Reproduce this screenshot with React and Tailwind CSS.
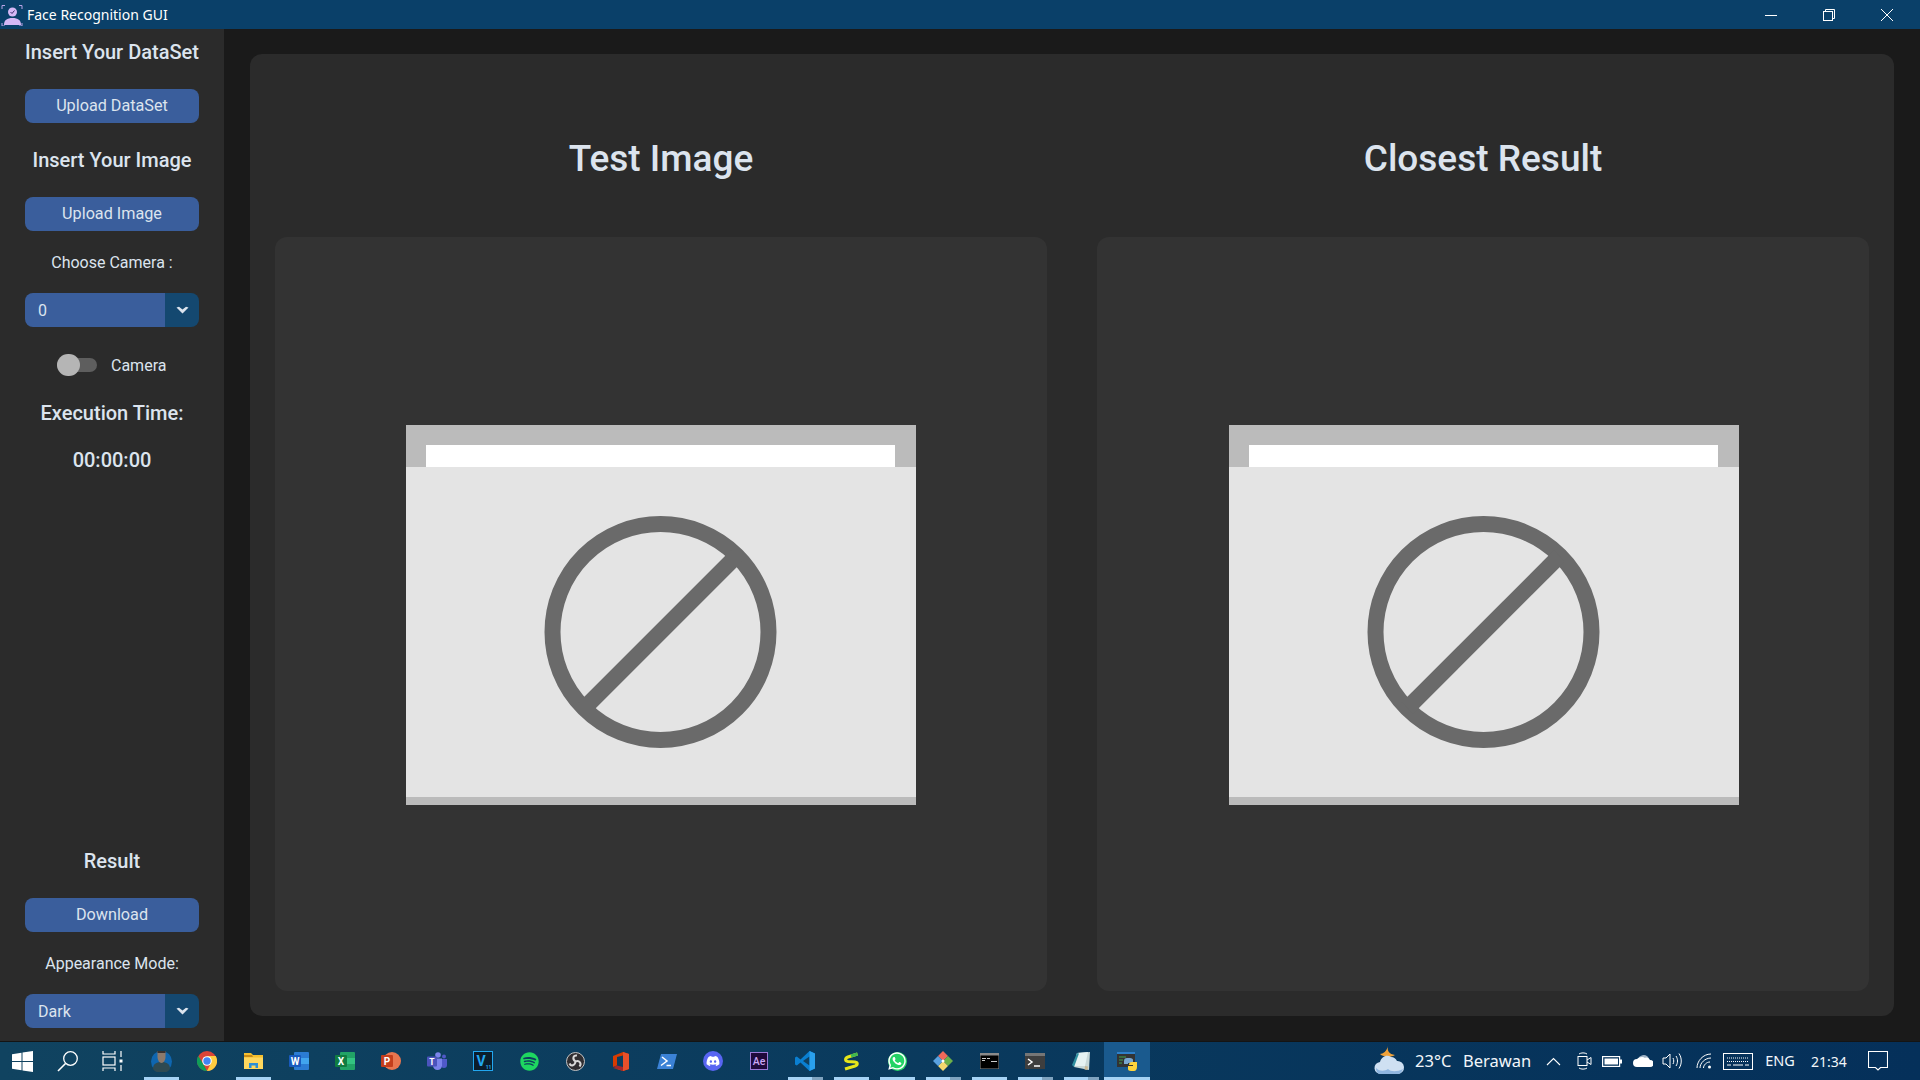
import React from 'react';
import { FaSpotify, FaDiscord, FaWhatsapp } from 'react-icons/fa';

const Heading = ({ className = '', children }) => (
  <div className={`flex h-7 items-center justify-center text-[20px] font-medium text-[#dce4ee] ${className}`}>{children}</div>
);

const Label = ({ className = '', children }) => (
  <div className={`flex h-6 items-center justify-center pt-[2px] text-[16px] text-[#dce4ee] ${className}`}>{children}</div>
);

const SideButton = ({ className = '', children }) => (
  <button className={`mx-[25px] flex h-[34px] w-[174px] items-center justify-center rounded-lg bg-[#3a5e9c] text-[16.2px] text-[#dce4ee] ${className}`}>
    {children}
  </button>
);

const Dropdown = ({ className = '', value }) => (
  <div className={`mx-[25px] flex h-[34px] w-[174px] overflow-hidden rounded-lg ${className}`}>
    <div className="flex w-[140px] items-center bg-[#3a5e9c] pl-[13px] pt-[2px] text-[16px] text-[#dce4ee]">{value}</div>
    <div className="flex w-[34px] items-center justify-center bg-[#144870] pl-px">
      <svg width="13" height="8" viewBox="0 0 13 8">
        <path d="M0.500 1.500 3 0.800 6.500 3.500 10 0.800 12.500 1.500 6.500 7.500z" fill="#dce4ee" />
      </svg>
    </div>
  </div>
);

const NoImage = () => (
  <svg width="510" height="380" viewBox="0 0 510 380" className="shrink-0">
    <rect width="510" height="380" fill="#e4e4e4" />
    <rect width="510" height="42" fill="#bbbbbb" />
    <rect x="20" y="20" width="469" height="22" fill="#ffffff" />
    <rect y="372" width="510" height="8" fill="#bbbbbb" />
    <circle cx="254.500" cy="207" r="108" fill="none" stroke="#6a6a6a" strokeWidth="16" />
    <line x1="330.500" y1="131" x2="178.500" y2="283" stroke="#6a6a6a" strokeWidth="16" />
  </svg>
);

const AppIcon = () => (
  <svg width="22" height="22" viewBox="0 0 22 22" fill="none">
    <path d="M1 5V1.500H4M18 1.500H21V5M1 19V22H4M18 22H21V19" stroke="#b9a4e8" strokeWidth="1" />
    <circle cx="11.500" cy="8" r="4.500" fill="#d5b8f5" />
    <path d="M3 21c0-5 3-7 8.500-7S20 16 20 21z" fill="#d5b8f5" />
    <path d="M9.500 8l1.500 1.500 2.500-3" stroke="#3a2a6a" strokeWidth="1" />
  </svg>
);

// taskbar icons
const Win = () => (
  <svg width="21" height="21" viewBox="0 0 21 21" fill="#fff">
    <path d="M0 3.200 9.500 1.800V10H0zM10.500 1.600 21 0V10H10.500zM0 11H9.500V19.200L0 17.800zM10.500 11H21V21L10.500 19.400z" />
  </svg>
);
const Search = () => (
  <svg width="22" height="22" viewBox="0 0 22 22" fill="none" stroke="#fff" strokeWidth="1.300">
    <circle cx="13.500" cy="8.500" r="6.800" />
    <path d="M8.500 13.500 1 21" strokeWidth="1.600" />
  </svg>
);
const TaskView = () => (
  <svg width="21" height="20" viewBox="0 0 21 20" fill="none" stroke="#fff" strokeWidth="1.200">
    <path d="M1 0v3h12V0M1 20v-3h12v3" />
    <rect x="1" y="6" width="12" height="8" />
    <path d="M19 0v6M19 14v6" />
    <rect x="17.500" y="8.500" width="3" height="3" fill="#fff" stroke="none" />
  </svg>
);
const Profile = () => (
  <svg width="21" height="21" viewBox="0 0 21 21">
    <circle cx="10.500" cy="10.500" r="10.500" fill="#0f66b0" />
    <path d="M2 18c0-5 3-7 8.500-7s8.500 2 8.500 7a10.500 10.500 0 0 1-17 0z" fill="#2f4a52" />
    <path d="M6.500 0h8v6c0 3-2 6-4 6s-4-3-4-6z" fill="#8d7a6c" />
    <path d="M6.500 0h8v2h-8z" fill="#3a3230" />
  </svg>
);
const Chrome = () => (
  <svg width="20" height="20" viewBox="0 0 20 20">
    <circle cx="10" cy="10" r="10" fill="#db4437" />
    <path d="M10 20A10 10 0 0 1 1.300 5L6 12.500 10 20z" fill="#0f9d58" />
    <path d="M10 20A10 10 0 0 0 18.700 5H10l4 7z" fill="#ffcd40" />
    <circle cx="10" cy="10" r="4.800" fill="#fff" />
    <circle cx="10" cy="10" r="3.700" fill="#4285f4" />
  </svg>
);
const Explorer = () => (
  <svg width="19" height="16" viewBox="0 0 19 16">
    <path d="M0 0h7l2 2h10v14H0z" fill="#f5c02f" />
    <path d="M0 2h8l1 2H0z" fill="#c98b17" />
    <path d="M0 4.500h19V16H0z" fill="#ffd85e" />
    <path d="M5 15v-5h9v5h-2.500v-2.500h-4V15z" fill="#2d8fd5" />
  </svg>
);
const Office = ({ front, back, back2, letter }) => (
  <svg width="20" height="18" viewBox="0 0 20 18">
    <rect x="5" width="15" height="18" rx="1" fill={back} />
    <rect x="12" y="6" width="8" height="6" fill={back2} />
    <rect y="3" width="12" height="12" rx="1" fill={front} />
    <text x="6" y="12.500" textAnchor="middle" fontFamily="Roboto, sans-serif" fontWeight="700" fontSize="10" fill="#fff">{letter}</text>
  </svg>
);
const Ppt = () => (
  <svg width="20" height="18" viewBox="0 0 20 18">
    <circle cx="11" cy="9" r="9" fill="#e9764f" />
    <rect y="3" width="12" height="12" rx="1" fill="#c43e1c" />
    <text x="6" y="12.500" textAnchor="middle" fontFamily="Roboto, sans-serif" fontWeight="700" fontSize="10" fill="#fff">P</text>
  </svg>
);
const Teams = () => (
  <svg width="20" height="18" viewBox="0 0 20 18">
    <circle cx="11" cy="3" r="2.800" fill="#7b83eb" />
    <circle cx="17" cy="4.500" r="2" fill="#5059c9" />
    <path d="M14 7h6v6a3 3 0 0 1-6 0z" fill="#5059c9" />
    <path d="M6 6.500h9v7a4.500 4.500 0 0 1-9 0z" fill="#7b83eb" />
    <rect y="4.500" width="10" height="10" rx="1" fill="#4b53bc" />
    <text x="5" y="12.500" textAnchor="middle" fontFamily="Roboto, sans-serif" fontWeight="700" fontSize="8.500" fill="#fff">T</text>
  </svg>
);
const Wondershare = () => (
  <svg width="20" height="20" viewBox="0 0 20 20">
    <rect x="0.500" y="0.500" width="19" height="19" fill="#0b1d2c" stroke="#22a7f0" />
    <text x="8" y="15" textAnchor="middle" fontFamily="Roboto, sans-serif" fontWeight="700" fontSize="14" fill="#22a7f0">V</text>
    <text x="15.500" y="17.500" textAnchor="middle" fontFamily="Roboto, sans-serif" fontWeight="700" fontSize="5" fill="#22a7f0">11</text>
  </svg>
);
const Obs = () => (
  <svg width="19" height="19" viewBox="0 0 19 19" fill="none">
    <circle cx="9.500" cy="9.500" r="9" fill="#302e31" stroke="#c4c4c4" strokeWidth="1" />
    <path d="M9.500 9.500C6 7 7 3 11 3.500M9.500 9.500C13.500 8 16 11.500 13.500 14.500M9.500 9.500C9 13.500 5 15 3.500 11.500" stroke="#d8d8d8" strokeWidth="2" />
  </svg>
);
const OfficeLogo = () => (
  <svg width="16" height="19" viewBox="0 0 16 19">
    <path d="M0 4 10 0l6 2v15l-6 2-10-3 10 1V3.500L4 5v8.500L0 15z" fill="#d83b01" />
    <path d="M10 0l6 2v15l-6 2z" fill="#e8502a" />
    <path d="M0 15l4-1.500L10 15v4z" fill="#a4262c" />
  </svg>
);
const PowerShell = () => (
  <svg width="20" height="15" viewBox="0 0 20 15">
    <path d="M4 0h16l-4 15H0z" fill="#3b82d6" />
    <path d="M5 3l5 4-6 4.500" fill="none" stroke="#fff" strokeWidth="1.500" />
    <path d="M9.500 11.500h4.500" stroke="#fff" strokeWidth="1.500" />
  </svg>
);
const Ae = () => (
  <svg width="18" height="18" viewBox="0 0 18 18">
    <rect x="0.500" y="0.500" width="17" height="17" fill="#1f0a3c" stroke="#9a7ad8" />
    <text x="9" y="13" textAnchor="middle" fontFamily="Roboto, sans-serif" fontWeight="500" fontSize="10.500" fill="#c9a6f5">Ae</text>
  </svg>
);
const VsCode = () => (
  <svg width="20" height="20" viewBox="0 0 20 20">
    <path d="M14.500 0 20 2.500v15L14.500 20 5.500 11.500 1.800 14.500 0 13.500V6.500l1.800-1 3.700 3z" fill="#0a7fd1" />
    <path d="M14.500 5.500 8 10l6.500 4.500z" fill="#0f4060" />
    <path d="M14.500 0 20 2.500v15L14.500 20z" fill="#2aa0ec" />
  </svg>
);
const Sublime = () => (
  <svg width="16" height="19" viewBox="0 0 16 19" fill="none">
    <path d="M14.500 2 5 5C1.500 6.500 2 9 5 9.500l7 .5c3 .5 3 3 0 4L2 17" stroke="#e6e61a" strokeWidth="3" />
    <path d="M14.500 2 8 4" stroke="#3fb950" strokeWidth="3" />
  </svg>
);
const Git = () => (
  <svg width="20" height="20" viewBox="0 0 20 20">
    <path d="M10 0l5 5-5 5-5-5z" fill="#f0685a" />
    <path d="M15 5l5 5-5 5-5-5z" fill="#6cb04a" />
    <path d="M10 10l5 5-5 5-5-5z" fill="#f5d76e" />
    <path d="M5 5l5 5-5 5-5-5z" fill="#5aa2e0" />
    <circle cx="10" cy="10" r="1.500" fill="#fff" />
  </svg>
);
const Cmd = () => (
  <svg width="19" height="16" viewBox="0 0 19 16">
    <rect width="19" height="16" fill="#8a8a8a" />
    <rect x="0.500" y="2.500" width="18" height="13" fill="#000" />
    <path d="M2 5h4v1H2zM2 7h3v1H2zM7 5h3v1H7zM11 8h6v1h-6z" fill="#ccc" />
  </svg>
);
const Terminal = () => (
  <svg width="20" height="16" viewBox="0 0 20 16">
    <rect width="20" height="16" fill="#3e3e3e" />
    <rect width="20" height="3" fill="#767676" />
    <path d="M3 6l4 3-4 3" fill="none" stroke="#fff" strokeWidth="1.500" />
    <path d="M9 13h6" stroke="#fff" strokeWidth="1.500" />
  </svg>
);
const Notepad = () => (
  <svg width="18" height="19" viewBox="0 0 18 19">
    <path d="M5 1 18 0l-1 18-15-3z" fill="#c8d8d8" />
    <path d="M5 1l11-1-3 14H2z" fill="#e6f2f2" />
    <path d="M0 13 5 1l2 .5L2 15z" fill="#2f8fa0" />
    <path d="M13 14l3 .5-.5 3.500-3-.5z" fill="#c8b894" />
  </svg>
);
const PyApp = () => (
  <svg width="20" height="19" viewBox="0 0 20 19">
    <rect width="18" height="15" fill="#333" />
    <rect width="18" height="2" fill="#2e80c9" />
    <path d="M2 5h7M2 8h4M2 11h3" stroke="#3fa34d" strokeWidth="1" />
    <path d="M7 12V9c0-2 1-3 3-3h3c2 0 3 1 3 2v3h-5v1z" fill="#7aa7d0" />
    <path d="M20 10v5c0 2-1 4-3 4h-3c-2 0-3-1-3-2v-3h5v-1h-4c0-2 1-3 3-3z" fill="#ffd43b" />
  </svg>
);
const Weather = () => (
  <svg width="31" height="30" viewBox="0 0 31 30">
    <path d="M14 0c-1 5 1 8 7 9-4 3-12 2-15-1 3 0 7-3 8-8z" fill="#f0a23a" />
    <path d="M7 28a6 6 0 0 1-1-12c1-5 7-8 11-5 3 0 5 2 6 4a6.500 6.500 0 0 1 1 13z" fill="#cfe0f2" />
    <path d="M2 22c4 4 9 3 12 1 3 3 9 3 15 0-1 3-3 5-5 5H7c-3 0-5-2-5-6z" fill="#8fb6e0" />
  </svg>
);
const Chevron = () => (
  <svg width="15" height="9" viewBox="0 0 15 9" fill="none" stroke="#fff" strokeWidth="1.100">
    <path d="M1 8 7.500 1.500 14 8" />
  </svg>
);
const Meet = () => (
  <svg width="15" height="18" viewBox="0 0 15 18" fill="none" stroke="#fff" strokeWidth="1">
    <rect x="1" y="4.500" width="9" height="9" />
    <path d="M10 8l4-2.500v7L10 10" />
    <path d="M2 2c2-1.500 6-1.500 8 0M2 16c2 1.500 6 1.500 8 0" />
  </svg>
);
const Battery = () => (
  <svg width="20" height="11" viewBox="0 0 20 11">
    <rect x="0.600" y="0.600" width="17" height="9.800" fill="none" stroke="#fff" strokeWidth="1.200" />
    <rect x="2.500" y="2.500" width="13.500" height="6" fill="#fff" />
    <rect x="18" y="3.500" width="2" height="4" fill="#fff" />
  </svg>
);
const OneDrive = () => (
  <svg width="20" height="12" viewBox="0 0 20 12">
    <path d="M5 4C6 1 9 0 11 0c2 0 4 1 5 4z" fill="#9fb2c4" />
    <path d="M4 12a4 4 0 0 1 0-8c2-2 6-3 8-1 2-1 4 0 5 2a3.500 3.500 0 0 1 0 7z" fill="#fff" />
  </svg>
);
const Speaker = () => (
  <svg width="20" height="18" viewBox="0 0 20 18" fill="none" stroke="#fff" strokeWidth="1">
    <path d="M1 6h3l4-4v14l-4-4H1z" />
    <path d="M11 6c1 2 1 4 0 6M14 4c2 3 2 7 0 10M17 1.500c3 4.500 3 10.500 0 15" />
  </svg>
);
const Wifi = () => (
  <svg width="16" height="16" viewBox="0 0 16 16" fill="none" stroke="#fff" strokeWidth="1">
    <path d="M1 15C1 8 7 1 15 1M4 15c0-5 5-10 11-10M7.500 15c0-3 3-6 6.500-6" />
    <circle cx="13.500" cy="14" r="1.500" fill="#fff" stroke="none" />
  </svg>
);
const Keyboard = () => (
  <svg width="30" height="17" viewBox="0 0 30 17" fill="none" stroke="#fff" strokeWidth="1">
    <rect x="0.500" y="0.500" width="29" height="16" />
    <path d="M4 5h22M4 8.500h22" strokeDasharray="1 1" />
    <path d="M4 12h4M10 12h10M22 12h4" />
  </svg>
);
const Notif = () => (
  <svg width="20" height="20" viewBox="0 0 20 20" fill="none" stroke="#fff" strokeWidth="1.100">
    <path d="M0.500 0.500h19v16h-7l-2.500 2.500-2.500-2.500h-7z" />
  </svg>
);

const apps = [
  { icon: <Profile />, bar: 'open' },
  { icon: <Chrome /> },
  { icon: <Explorer />, bar: 'open' },
  { icon: <Office front="#185abd" back="#2b7cd3" back2="#41a5ee" letter="W" /> },
  { icon: <Office front="#107c41" back="#21a366" back2="#33c481" letter="X" /> },
  { icon: <Ppt /> },
  { icon: <Teams /> },
  { icon: <Wondershare /> },
  { icon: <FaSpotify size={19} className="text-[#1ed760]" /> },
  { icon: <Obs /> },
  { icon: <OfficeLogo /> },
  { icon: <PowerShell /> },
  { icon: <span className="flex h-5 w-5 items-center justify-center rounded-full bg-[#5865f2]"><FaDiscord size={14} className="text-white" /></span> },
  { icon: <Ae /> },
  { icon: <VsCode />, bar: 'multi' },
  { icon: <Sublime />, bar: 'open' },
  { icon: <span className="flex h-[19px] w-[19px] items-center justify-center rounded-full bg-[#25d366]"><FaWhatsapp size={20} className="shrink-0 text-white" /></span>, bar: 'open' },
  { icon: <Git />, bar: 'multi' },
  { icon: <Cmd />, bar: 'open' },
  { icon: <Terminal />, bar: 'multi' },
  { icon: <Notepad />, bar: 'multi' },
  { icon: <PyApp />, bar: 'active' },
];

const TaskButton = ({ icon, bar }) => (
  <div className={`relative flex h-full w-[46px] items-center justify-center ${bar === 'active' ? 'bg-[#1a5a8e]' : ''}`}>
    {icon}
    {bar === 'open' && <div className="absolute bottom-0 left-[6px] h-[3px] w-[35px] bg-[#a6d3f5]" />}
    {bar === 'multi' && (
      <div className="absolute bottom-0 left-[6px] flex h-[3px] w-[35px]">
        <div className="w-6 bg-[#a6d3f5]" />
        <div className="flex-1 bg-[#7fa3bf]" />
      </div>
    )}
    {bar === 'active' && <div className="absolute bottom-0 left-0 h-[3px] w-full bg-[#a6d3f5]" />}
  </div>
);

const TrayIcon = ({ className = '', children }) => (
  <div className={`flex items-center justify-center ${className}`}>{children}</div>
);

export default function App() {
  return (
    <div className="flex h-screen flex-col overflow-hidden bg-[#1a1a1a] font-['Roboto',sans-serif]">
      {/* Title bar */}
      <header className="flex h-[29px] shrink-0 items-center bg-[#0a4069]">
        <div className="ml-px"><AppIcon /></div>
        <span className="ml-1 font-['Noto_Sans',sans-serif] text-[14px] text-white">Face Recognition GUI</span>
        <div className="ml-auto flex h-full pr-[2px]">
          <div className="flex w-[58px] items-center justify-center">
            <svg width="12" height="12" viewBox="0 0 12 12" stroke="#fff"><path d="M0 6.500h12" /></svg>
          </div>
          <div className="flex w-[58px] items-center justify-center">
            <svg width="12" height="12" viewBox="0 0 12 12" fill="none" stroke="#fff"><rect x="0.500" y="2.500" width="9" height="9" /><path d="M2.500 2.500V0.500h9v9H9.500" /></svg>
          </div>
          <div className="flex w-[60px] items-center justify-center pr-[3px]">
            <svg width="12" height="12" viewBox="0 0 12 12" stroke="#fff"><path d="M0 0l12 12M12 0 0 12" /></svg>
          </div>
        </div>
      </header>

      <div className="flex min-h-0 flex-1">
        {/* Sidebar */}
        <aside className="flex w-[224px] shrink-0 flex-col justify-between bg-[#2b2b2b] pb-[13px] pt-[9px]">
          <div>
            <Heading>Insert Your DataSet</Heading>
            <SideButton className="mt-[23px]">Upload DataSet</SideButton>
            <Heading className="mt-[23px]">Insert Your Image</Heading>
            <SideButton className="mt-[23px]">Upload Image</SideButton>
            <Label className="mt-[19px]">Choose Camera :</Label>
            <Dropdown className="mt-[19px]" value="0" />
            <div className="mt-[27px] flex h-[22px] items-center pl-[57px]">
              <div className="relative h-[14px] w-[40px] rounded-full bg-[#5e5e5e]">
                <div className="absolute -top-1 left-0 h-[22px] w-[23px] rounded-full bg-[#b5b5b5]" />
              </div>
              <span className="ml-[14px] pt-[2px] text-[16px] text-[#dce4ee]">Camera</span>
            </div>
            <Heading className="mt-[23px]">Execution Time:</Heading>
            <Heading className="mt-[19px]">00:00:00</Heading>
          </div>
          <div>
            <Heading>Result</Heading>
            <SideButton className="mt-[23px]">Download</SideButton>
            <Label className="mt-[19px]">Appearance Mode:</Label>
            <Dropdown className="mt-[19px]" value="Dark" />
          </div>
        </aside>

        {/* Main panel */}
        <main className="min-w-0 flex-1 p-[25px] pl-[26px] pr-[26px]">
          <div className="grid h-full grid-cols-2 grid-rows-[183px_1fr] gap-x-[50px] rounded-xl bg-[#2b2b2b] px-[25px] pb-[25px]">
            <h1 className="flex items-center justify-center pt-[27px] text-[37px] font-medium text-[#dce4ee]">Test Image</h1>
            <h1 className="flex items-center justify-center pt-[27px] text-[37px] font-medium text-[#dce4ee]">Closest Result</h1>
            <div className="flex items-center justify-center rounded-xl bg-[#333333] pt-[2px]"><NoImage /></div>
            <div className="flex items-center justify-center rounded-xl bg-[#333333] pl-px pt-[2px]"><NoImage /></div>
          </div>
        </main>
      </div>

      {/* Taskbar */}
      <footer className="flex h-[39px] shrink-0 border-t border-[#141414] bg-gradient-to-r from-[#104360] to-[#05305a] font-['Noto_Sans',sans-serif] text-white">
        <TrayIcon className="w-[45px]"><Win /></TrayIcon>
        <TrayIcon className="w-[45px]"><Search /></TrayIcon>
        <TrayIcon className="w-[45px]"><TaskView /></TrayIcon>
        <div className="ml-[3px] flex h-full">
          {apps.map((app, i) => <TaskButton key={i} icon={app.icon} bar={app.bar} />)}
        </div>
        <div className="ml-auto flex h-full items-center pr-[28px] text-[#f2f6fa]">
          <TrayIcon className="w-9"><Weather /></TrayIcon>
          <span className="ml-2 w-[38px] whitespace-nowrap text-[16.5px]">23°C</span>
          <span className="ml-[10px] w-[68px] whitespace-nowrap text-[16.5px]">Berawan</span>
          <TrayIcon className="ml-[9px] w-[26px]"><Chevron /></TrayIcon>
          <TrayIcon className="ml-1 w-7"><Meet /></TrayIcon>
          <TrayIcon className="w-7"><Battery /></TrayIcon>
          <TrayIcon className="ml-[2px] w-[30px]"><OneDrive /></TrayIcon>
          <TrayIcon className="w-7"><Speaker /></TrayIcon>
          <TrayIcon className="ml-1 w-7"><Wifi /></TrayIcon>
          <TrayIcon className="ml-[2px] w-9"><Keyboard /></TrayIcon>
          <span className="ml-[6px] w-9 text-center text-[14.5px]">ENG</span>
          <span className="ml-[6px] w-[50px] text-center text-[14px]">21:34</span>
          <TrayIcon className="ml-[10px] w-7"><Notif /></TrayIcon>
        </div>
      </footer>
    </div>
  );
}
